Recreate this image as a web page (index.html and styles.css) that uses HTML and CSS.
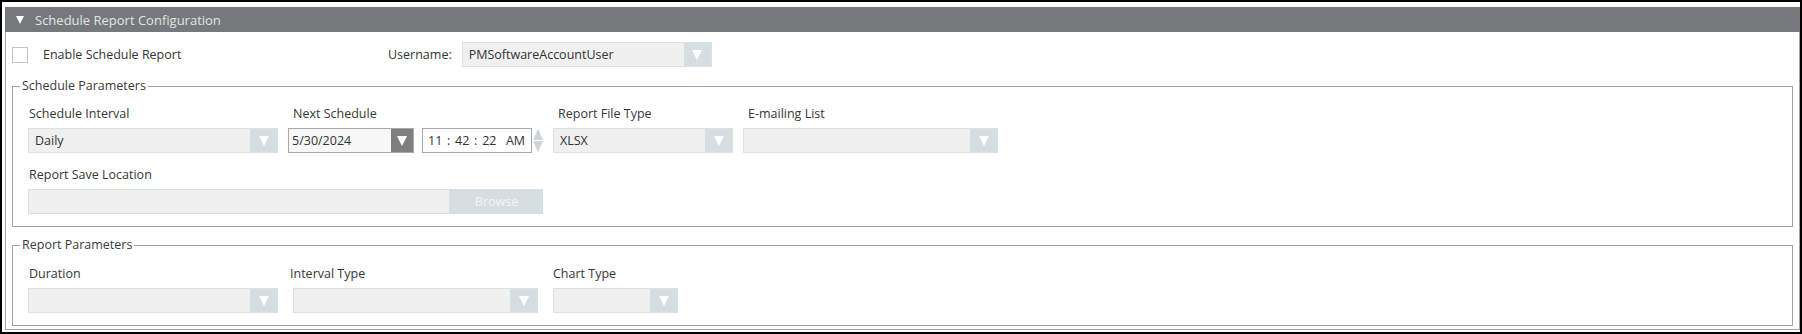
FILE: index.html
```html
<!DOCTYPE html>
<html>
<head>
    <title>Schedule Report Configuration</title>
    <link rel="stylesheet" href="styles.css">
</head>
<body>
<div class="frame">
    <div class="panel">
        <div class="panel-head"><span class="caret"></span>Schedule Report Configuration</div>
        <div class="panel-body">
            <div class="top-row">
                <label class="check-field"><span class="checkbox"></span>Enable Schedule Report</label>
                <span class="inline-label">Username:</span>
                <div class="combo w-250"><span class="value">PMSoftwareAccountUser</span><span class="drop"></span></div>
            </div>

            <fieldset class="group">
                <legend>Schedule Parameters</legend>
                <div class="field-row">
                    <div class="field">
                        <div class="label">Schedule Interval</div>
                        <div class="combo w-250"><span class="value">Daily</span><span class="drop"></span></div>
                    </div>
                    <div class="field">
                        <div class="label indent">Next Schedule</div>
                        <div class="datetime">
                            <div class="datebox"><span class="value">5/30/2024</span><span class="drop dark"></span></div>
                            <div class="timebox">11 : 42 : 22&nbsp; AM</div>
                            <div class="spinner">
                                <svg width="10" height="25" viewBox="0 0 10 25">
                                    <polygon points="5,1 10,12 0,12" fill="#cdd5d8"/>
                                    <polygon points="0,13 10,13 5,24" fill="#cdd5d8"/>
                                </svg>
                            </div>
                        </div>
                    </div>
                    <div class="field">
                        <div class="label indent">Report File Type</div>
                        <div class="combo w-180"><span class="value">XLSX</span><span class="drop"></span></div>
                    </div>
                    <div class="field">
                        <div class="label indent">E-mailing List</div>
                        <div class="combo w-255"><span class="value"></span><span class="drop"></span></div>
                    </div>
                </div>
                <div class="field-row second">
                    <div class="field">
                        <div class="label">Report Save Location</div>
                        <div class="path-row">
                            <div class="path-input"></div>
                            <div class="browse">Browse</div>
                        </div>
                    </div>
                </div>
            </fieldset>

            <fieldset class="group report">
                <legend>Report Parameters</legend>
                <div class="field-row wide">
                    <div class="field">
                        <div class="label">Duration</div>
                        <div class="combo w-250"><span class="value"></span><span class="drop"></span></div>
                    </div>
                    <div class="field">
                        <div class="label pull">Interval Type</div>
                        <div class="combo w-245"><span class="value"></span><span class="drop"></span></div>
                    </div>
                    <div class="field">
                        <div class="label flush">Chart Type</div>
                        <div class="combo w-125"><span class="value"></span><span class="drop"></span></div>
                    </div>
                </div>
            </fieldset>
        </div>
    </div>
</div>
</body>
</html>
```

FILE: styles.css
```css
body {
    margin: 0;
    background: #fff;
    font-family: "Open Sans", "Noto Sans", sans-serif;
    color: #333;
}

.frame {
    width: 1802px;
    height: 334px;
    box-sizing: border-box;
    border: 2px solid #000;
    padding: 5px 0 0 3px;
    overflow: hidden;
}

.panel {
    border: 1px solid #a3a3a3;
    border-top: 0;
}

.panel-head {
    height: 25px;
    margin: 0 -1px;
    padding-left: 11px;
    background: #75797c;
    color: #e4e4e4;
    font-size: 13px;
    display: flex;
    align-items: center;
}

.caret {
    width: 0;
    height: 0;
    border-left: 4.5px solid transparent;
    border-right: 4.5px solid transparent;
    border-top: 8px solid #fff;
    margin-right: 11px;
}

.panel-body {
    padding: 10px 6px 3px;
}

.top-row {
    display: flex;
    align-items: center;
    height: 25px;
    font-size: 12.5px;
}

.check-field {
    width: 376px;
    display: flex;
    align-items: center;
}

.checkbox {
    width: 16px;
    height: 16px;
    box-sizing: border-box;
    border: 1px solid #c4c4c4;
    background: #fff;
    margin-right: 15px;
}

.inline-label {
    margin-right: 10px;
}

/* combo boxes */
.combo {
    display: flex;
    height: 25px;
    box-sizing: border-box;
    border: 1px solid #d9e2e5;
    background: #f0f0f0;
}
.combo .value,
.datebox .value {
    flex: 1;
    padding-left: 6px;
    line-height: 23px;
    font-size: 12.5px;
    white-space: nowrap;
    overflow: hidden;
}
.drop {
    width: 27px;
    background: #d5dee1;
    display: flex;
    align-items: center;
    justify-content: center;
}
.drop::after {
    content: "";
    border-left: 5.5px solid transparent;
    border-right: 5.5px solid transparent;
    border-top: 10px solid #fff;
}
.drop.dark {
    width: 22px;
    background: #7f7f7f;
}

.w-250 { width: 250px; }
.w-245 { width: 245px; }
.w-255 { width: 255px; }
.w-180 { width: 180px; }
.w-125 { width: 125px; }

/* group boxes */
.group {
    margin: 11px 0 0;
    padding: 11px 15px 12px;
    border: 1px solid #a2a2a2;
}
.group legend {
    font-size: 12.5px;
    line-height: 16px;
    padding: 0 2px;
    margin-left: -8px;
    color: #3a3a3a;
}
.group.report {
    margin-top: 10px;
    padding-top: 12px;
}

.field-row {
    display: flex;
    gap: 10px;
}
.field-row.wide { gap: 15px; }
.field-row.second { margin-top: 13px; }

.field {
    display: flex;
    flex-direction: column;
}

.label {
    font-size: 12.5px;
    line-height: 17px;
    height: 17px;
    margin-bottom: 6px;
    padding-left: 1px;
    color: #363636;
    white-space: nowrap;
}
.label.indent { padding-left: 5px; }
.label.pull { margin-left: -4px; }
.label.flush { padding-left: 0; }

/* date and time */
.datetime {
    display: flex;
    height: 25px;
}
.datebox {
    width: 126px;
    display: flex;
    box-sizing: border-box;
    border: 1px solid #a9a9a9;
    background: #f7f7f7;
}
.datebox .value { padding-left: 3px; }
.timebox {
    width: 110px;
    box-sizing: border-box;
    margin-left: 8px;
    padding-left: 5px;
    border: 1px solid #a9a9a9;
    background: #fff;
    font-size: 12.5px;
    line-height: 23px;
    word-spacing: 1.5px;
    white-space: nowrap;
}
.spinner {
    width: 10px;
    margin-left: 1px;
}
.spinner svg { display: block; }

/* save location */
.path-row {
    display: flex;
    height: 25px;
}
.path-input {
    width: 422px;
    box-sizing: border-box;
    border: 1px solid #d6e1e6;
    background: #f0f0f0;
}
.browse {
    width: 93px;
    background: #d5dee1;
    color: #f3f6f7;
    font-size: 12.5px;
    line-height: 25px;
    text-align: center;
}
```
